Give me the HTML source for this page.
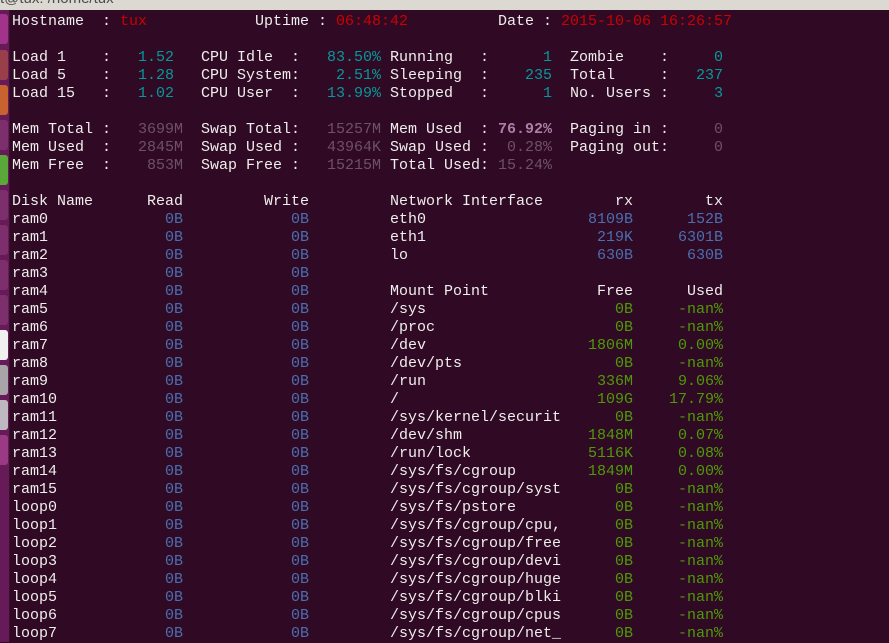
<!DOCTYPE html>
<html><head><meta charset="utf-8"><style>
body{margin:0;width:889px;height:642px;overflow:hidden;background:#300a24;position:relative;font-family:"Liberation Mono",monospace;font-size:15px;color:#eeeeec}
#top{position:absolute;left:0;top:0;width:889px;height:10px;background:#dcd9d3;overflow:hidden}
#top span{position:absolute;left:0;top:-10px;font-family:"Liberation Sans",sans-serif;font-size:15px;color:#4c4c4c}
#lb{position:absolute;left:0;top:10px;width:9px;height:632px;background:#661a57;border-right:1px solid #3a0f30}
#lb i{position:absolute;left:0;width:8px;height:30px;border-radius:0 3px 3px 0}
.r{position:absolute;left:0;height:18px;line-height:18px;width:889px;white-space:pre}
.r span{position:absolute;top:0;white-space:pre}
.re{color:#cc0000}.te{color:#06989a}.gy{color:#6e5168}.bl{color:#4a6fb0}.gr{color:#4e9a06}.bo{color:#ad7fa8;font-weight:bold}
</style></head><body>
<div id="top"><span>t@tux: /home/tux</span></div>
<div id="lb">
<i style="top:4px;background:#a2338a"></i>
<i style="top:40px;background:#9a3f4a"></i>
<i style="top:75px;background:#c8622e"></i>
<i style="top:110px;background:#7c2f6c"></i>
<i style="top:145px;background:#5aa83a"></i>
<i style="top:180px;background:#7c2f6c"></i>
<i style="top:215px;background:#7c2f6c"></i>
<i style="top:250px;background:#7c2f6c"></i>
<i style="top:285px;background:#7c2f6c"></i>
<i style="top:320px;background:#f0f0f0"></i>
<i style="top:355px;background:#a8a4a8"></i>
<i style="top:390px;background:#c0b8c0"></i>
<i style="top:425px;background:#9a3a84"></i>
</div>
<div id="t"></div>
<script>
var rows=[
[0,[[0,"Hostname"],[10,":"],[12,"tux","re"],[27,"Uptime"],[34,":"],[36,"06:48:42","re"],[54,"Date"],[59,":"],[61,"2015-10-06 16:26:57","re"]]],
[2,[[0,"Load 1"],[10,":"],[14,"1.52","te"],[21,"CPU Idle"],[31,":"],[35,"83.50%","te"],[42,"Running"],[52,":"],[59,"1","te"],[62,"Zombie"],[72,":"],[78,"0","te"]]],
[3,[[0,"Load 5"],[10,":"],[14,"1.28","te"],[21,"CPU System:"],[35," 2.51%","te"],[42,"Sleeping"],[52,":"],[57,"235","te"],[62,"Total"],[72,":"],[76,"237","te"]]],
[4,[[0,"Load 15"],[10,":"],[14,"1.02","te"],[21,"CPU User"],[31,":"],[35,"13.99%","te"],[42,"Stopped"],[52,":"],[59,"1","te"],[62,"No. Users"],[72,":"],[78,"3","te"]]],
[6,[[0,"Mem Total"],[10,":"],[14,"3699M","gy"],[21,"Swap Total:"],[35,"15257M","gy"],[42,"Mem Used"],[52,":"],[54,"76.92%","bo"],[62,"Paging in"],[72,":"],[78,"0","gy"]]],
[7,[[0,"Mem Used"],[10,":"],[14,"2845M","gy"],[21,"Swap Used"],[31,":"],[35,"43964K","gy"],[42,"Swap Used"],[52,":"],[55,"0.28%","gy"],[62,"Paging out:"],[78,"0","gy"]]],
[8,[[0,"Mem Free"],[10,":"],[15,"853M","gy"],[21,"Swap Free"],[31,":"],[35,"15215M","gy"],[42,"Total Used:"],[54,"15.24%","gy"]]],
[10,[[0,"Disk Name"],[15,"Read"],[28,"Write"],[42,"Network Interface"],[67,"rx"],[77,"tx"]]],
[11,[[42,"eth0"],[64,"8109B","bl"],[75,"152B","bl"]]],
[12,[[42,"eth1"],[65,"219K","bl"],[74,"6301B","bl"]]],
[13,[[42,"lo"],[65,"630B","bl"],[75,"630B","bl"]]],
[15,[[42,"Mount Point"],[65,"Free"],[75,"Used"]]]
];
var disks=[];for(var i=0;i<16;i++)disks.push("ram"+i);for(i=0;i<8;i++)disks.push("loop"+i);
disks.forEach(function(d,k){rows.push([11+k,[[0,d],[17,"0B","bl"],[31,"0B","bl"]]]);});
var m=[["/sys","0B","-nan%"],["/proc","0B","-nan%"],["/dev","1806M","0.00%"],["/dev/pts","0B","-nan%"],["/run","336M","9.06%"],["/","109G","17.79%"],["/sys/kernel/securit","0B","-nan%"],["/dev/shm","1848M","0.07%"],["/run/lock","5116K","0.08%"],["/sys/fs/cgroup","1849M","0.00%"],["/sys/fs/cgroup/syst","0B","-nan%"],["/sys/fs/pstore","0B","-nan%"],["/sys/fs/cgroup/cpu,","0B","-nan%"],["/sys/fs/cgroup/free","0B","-nan%"],["/sys/fs/cgroup/devi","0B","-nan%"],["/sys/fs/cgroup/huge","0B","-nan%"],["/sys/fs/cgroup/blki","0B","-nan%"],["/sys/fs/cgroup/cpus","0B","-nan%"],["/sys/fs/cgroup/net_","0B","-nan%"]];
m.forEach(function(x,k){rows.push([16+k,[[42,x[0]],[69-x[1].length,x[1],"gr"],[79-x[2].length,x[2],"gr"]]]);});
var h="";
rows.forEach(function(r){h+='<div class="r" style="top:'+(13+18*r[0])+'px">';r[1].forEach(function(c){h+='<span class="'+(c[2]||"")+'" style="left:'+(12+9*c[0])+'px">'+c[1]+'</span>';});h+='</div>';});
document.getElementById("t").innerHTML=h;
</script>
</body></html>
